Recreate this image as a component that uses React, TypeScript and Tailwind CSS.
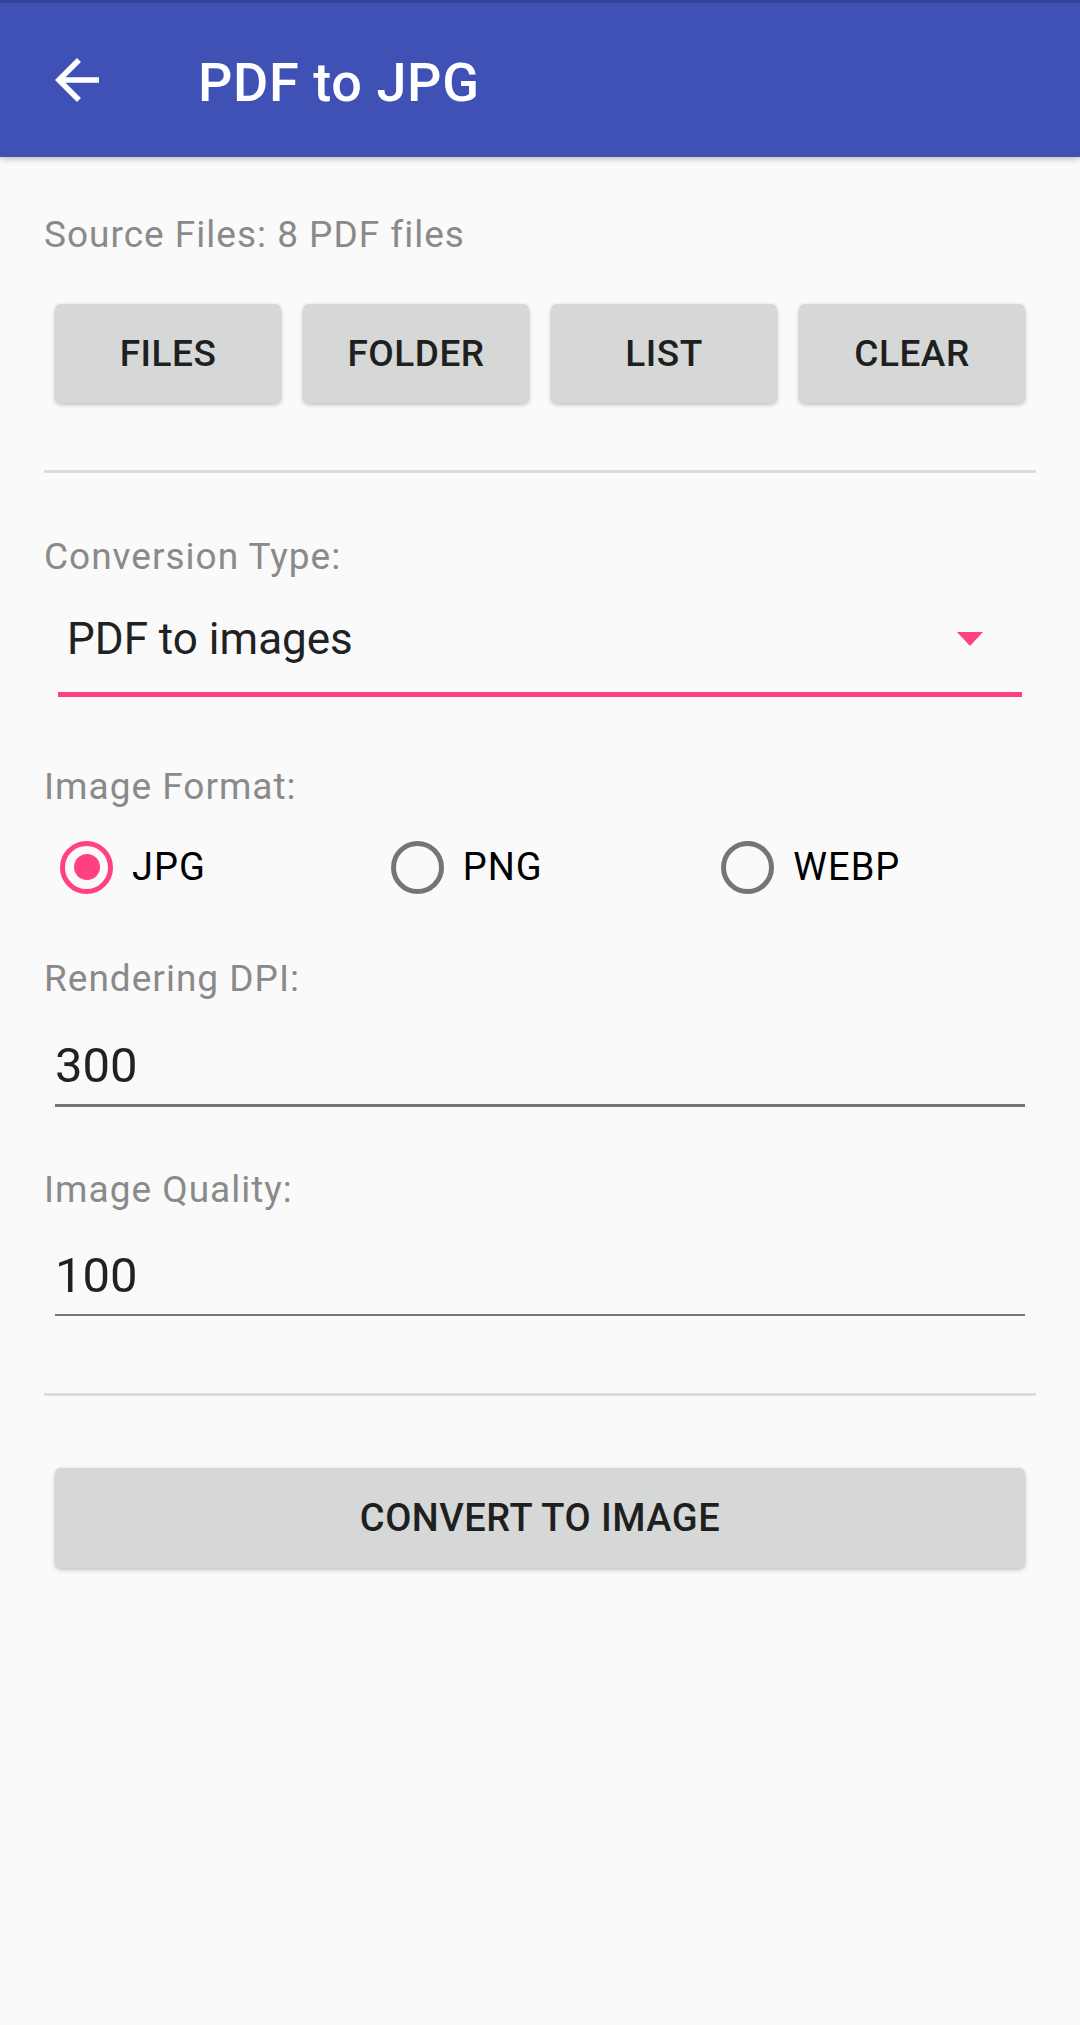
import { useState } from "react";

const formats = ["JPG", "PNG", "WEBP"];

function RaisedButton({ label, className = "" }: { label: string; className?: string }) {
    return (
        <button
            type="button"
            className={`flex items-center justify-center rounded-[6px] bg-[#d6d7d7] text-[37px] font-medium tracking-[0.5px] text-[#1f1f1f] shadow-[0_2px_4px_rgba(0,0,0,0.22),0_0_2px_rgba(0,0,0,0.08)] ${className}`}
        >
            {label}
        </button>
    );
}

function Label({ text, className = "" }: { text: string; className?: string }) {
    return <p className={`text-[37px] leading-[40px] tracking-[1px] text-[#8a8a8a] ${className}`}>{text}</p>;
}

function NumberField({ value, className = "" }: { value: string; className?: string }) {
    return (
        <div className={`mx-[11px] ${className}`}>
            <p className="text-[49px] leading-[60px] text-[#212121]">{value}</p>
            <div className="mt-[8px] h-[2.5px] bg-[#757575]" />
        </div>
    );
}

export default function App() {
    const [format, setFormat] = useState("JPG");

    return (
        <div className="min-h-[2025px] bg-[#fafafa] font-['Roboto',sans-serif]">
            <header className="relative z-10 flex h-[157px] items-center border-t-[3px] border-[#33449e] bg-[#3f51b5] pl-[44px] shadow-[0_2px_6px_rgba(0,0,0,0.25)]">
                <svg width="66" height="66" viewBox="0 0 24 24" fill="#ffffff">
                    <path d="M20 11H7.83l5.59-5.59L12 4l-8 8 8 8 1.41-1.41L7.83 13H20v-2z" />
                </svg>
                <h1 className="ml-[88px] mt-[5px] text-[54px] font-medium leading-none tracking-[0.6px] text-white">PDF to JPG</h1>
            </header>

            <main className="px-[44px] pt-[58px]">
                <Label text="Source Files: 8 PDF files" />

                <div className="mx-[11px] mt-[49px] grid h-[99px] grid-cols-4 gap-[22px]">
                    <RaisedButton label="FILES" />
                    <RaisedButton label="FOLDER" />
                    <RaisedButton label="LIST" />
                    <RaisedButton label="CLEAR" />
                </div>

                <div className="mt-[67px] h-[3px] bg-[#dcdcdc]" />

                <Label text="Conversion Type:" className="mt-[64px]" />

                <div className="mx-[14px] mt-[8px] border-b-[5px] border-[#ff4081]">
                    <div className="flex h-[107px] items-center justify-between pl-[9px] pr-[39px]">
                        <span className="text-[44px] leading-[60px] text-[#212121]">PDF to images</span>
                        <svg width="26" height="14" viewBox="0 0 26 14" fill="#ff4081">
                            <polygon points="0,0 26,0 13,14" />
                        </svg>
                    </div>
                </div>

                <Label text="Image Format:" className="mt-[70px]" />

                <div className="mt-[32px] grid h-[56px] grid-cols-3">
                    {formats.map((f) => (
                        <label
                            key={f}
                            className="flex cursor-pointer items-center pl-[16px]"
                            onClick={() => setFormat(f)}
                        >
                            <span
                                className={`flex h-[53px] w-[53px] items-center justify-center rounded-full border-[5px] ${
                                    format === f ? "border-[#ff4081]" : "border-[#757575]"
                                }`}
                            >
                                {format === f ? <span className="h-[26px] w-[26px] rounded-full bg-[#ff4081]" /> : null}
                            </span>
                            <span className="ml-[19px] text-[38px] leading-[40px] tracking-[1px] text-black">{f}</span>
                        </label>
                    ))}
                </div>

                <Label text="Rendering DPI:" className="mt-[64px]" />
                <NumberField value="300" className="mt-[37px]" />

                <Label text="Image Quality:" className="mt-[63px]" />
                <NumberField value="100" className="mt-[36px]" />

                <div className="mt-[77px] h-[3px] bg-[#dcdcdc]" />

                <div className="mx-[11px] mt-[72px]">
                    <RaisedButton label="CONVERT TO IMAGE" className="h-[100px] w-full text-[38px]" />
                </div>
            </main>
        </div>
    );
}
